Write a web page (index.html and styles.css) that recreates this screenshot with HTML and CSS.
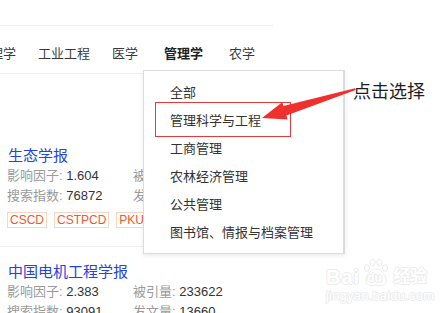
FILE: index.html
```html
<!DOCTYPE html>
<html lang="zh-CN">
<head>
<meta charset="utf-8">
<title>期刊列表</title>
<link rel="stylesheet" href="styles.css">
</head>
<body>
<div class="page">
  <div class="main">
    <div class="topbar"></div>
    <nav class="nav">
      <span class="nav-item">理学</span>
      <span class="nav-item">工业工程</span>
      <span class="nav-item">医学</span>
      <span class="nav-item active">管理学</span>
      <span class="nav-item">农学</span>
    </nav>
    <div class="list">
      <div class="card">
        <div class="title">生态学报</div>
        <div class="row"><span class="col1"><span class="lbl">影响因子: </span>1.604</span><span class="col2"><span class="lbl">被引量: </span>117452</span></div>
        <div class="row"><span class="col1"><span class="lbl">搜索指数: </span>76872</span><span class="col2"><span class="lbl">发文量: </span>18032</span></div>
        <div class="tags"><span class="tag">CSCD</span><span class="tag">CSTPCD</span><span class="tag">PKU</span></div>
      </div>
      <div class="card">
        <div class="title">中国电机工程学报</div>
        <div class="row"><span class="col1"><span class="lbl">影响因子: </span>2.383</span><span class="col2"><span class="lbl">被引量: </span>233622</span></div>
        <div class="row"><span class="col1"><span class="lbl">搜索指数: </span>93091</span><span class="col2"><span class="lbl">发文量: </span>13660</span></div>
      </div>
    </div>
  </div>

  <ul class="dropdown">
    <li>全部</li>
    <li>管理科学与工程</li>
    <li>工商管理</li>
    <li>农林经济管理</li>
    <li>公共管理</li>
    <li>图书馆、情报与档案管理</li>
  </ul>

  <div class="highlight"></div>
  <svg class="arrow" width="444" height="313" viewBox="0 0 444 313">
    <polygon fill="#f0302c" points="262,118 282.2,102.3 283.4,106.1 355,88.3 355.6,89.9 286.4,115.6 287.6,119.4"/>
  </svg>
  <div class="note">点击选择</div>

  <div class="watermark">
    <div class="wm-top">
      <span class="wm-bai">Bai</span>
      <span class="wm-paw">
        <svg width="30" height="30" viewBox="0 0 30 30">
          <g fill="#fff" stroke="#e9e9e9" stroke-width="0.9">
            <ellipse cx="6" cy="10" rx="2.6" ry="3.2"/>
            <ellipse cx="11.5" cy="4.5" rx="2.6" ry="3.2"/>
            <ellipse cx="18.5" cy="4.5" rx="2.6" ry="3.2"/>
            <ellipse cx="24" cy="10" rx="2.6" ry="3.2"/>
            <path d="M15 11 C9 11 4 19 5 24 C6 28 10 28 15 27 C20 28 24 28 25 24 C26 19 21 11 15 11 Z"/>
          </g>
        </svg>
        <span class="wm-du">du</span>
      </span>
      <span class="wm-jy">经验</span>
    </div>
    <div class="wm-url">jingyan.baidu.com</div>
  </div>
</div>
</body>
</html>
```

FILE: styles.css
```css
* { box-sizing: border-box; }
html, body {
  margin: 0;
  padding: 0;
  background: #fff;
}
body {
  font-family: "Liberation Sans", "Noto Sans CJK SC", sans-serif;
  color: #333;
  font-size: 13px;
}
.page {
  position: relative;
  width: 444px;
  height: 313px;
  overflow: hidden;
}
.main {
  width: 273px;
}
.topbar {
  height: 26px;
  border-bottom: 1px solid #eeeeee;
}
.nav {
  display: flex;
  gap: 22px;
  margin-left: -10px;
  padding: 18px 0 9px;
  line-height: 20px;
  font-size: 13px;
  color: #3a3a3a;
  border-bottom: 1px solid #eeeeee;
  white-space: nowrap;
}
.nav-item.active {
  font-weight: bold;
  color: #222;
  padding: 0 4px;
}
.list {
  padding-top: 57px;
}
.card {
  padding: 15px 0 18px 7px;
  border-bottom: 1px solid #eeeeee;
}
.title {
  font-size: 15px;
  line-height: 20px;
  color: #2244dd;
  padding-left: 1px;
}
.row {
  display: flex;
  line-height: 20px;
  font-size: 13px;
  color: #333;
  white-space: nowrap;
}
.col1 { width: 126px; }
.lbl { color: #9a9a9a; }
.tags {
  display: flex;
  gap: 7px;
  margin-top: 6px;
}
.tag {
  font-size: 12px;
  line-height: 14px;
  padding: 0 2px;
  border: 1px solid #fbd5c2;
  color: #f5582a;
}
.dropdown {
  position: absolute;
  left: 143px;
  top: 70px;
  width: 202px;
  margin: 0;
  padding: 8px 0 6px;
  list-style: none;
  background: #fff;
  border: 1px solid #dddddd;
  border-right: 2px solid #dcdcdc;
  box-shadow: 0 2px 4px rgba(0, 0, 0, 0.08);
}
.dropdown li {
  line-height: 28px;
  padding-left: 26px;
  font-size: 13px;
  color: #333;
  white-space: nowrap;
}
.highlight {
  position: absolute;
  left: 155px;
  top: 102px;
  width: 136px;
  height: 35px;
  border: 1.5px solid #e8393a;
}
.arrow {
  position: absolute;
  left: 0;
  top: 0;
  pointer-events: none;
}
.note {
  position: absolute;
  left: 353px;
  top: 78px;
  font-size: 18px;
  line-height: 24px;
  color: #1e1e1e;
  font-family: "Noto Sans CJK SC", sans-serif;
}
.watermark {
  position: absolute;
  left: 326px;
  top: 258px;
  color: #fff;
  font-family: "Liberation Sans", "Noto Sans CJK SC", sans-serif;
}
.wm-top {
  display: flex;
  align-items: flex-end;
  height: 30px;
}
.wm-bai, .wm-jy, .wm-du, .wm-url {
  text-shadow: -1px 0 #ececec, 1px 0 #ececec, 0 -1px #ececec, 0 1px #ececec;
}
.wm-bai {
  font-size: 20px;
  font-weight: bold;
  line-height: 22px;
  letter-spacing: 1px;
}
.wm-paw {
  position: relative;
  width: 30px;
  height: 30px;
  margin: 0 2px 0 1px;
}
.wm-paw svg { display: block; }
.wm-du {
  position: absolute;
  left: 6px;
  top: 13px;
  font-size: 12px;
  font-weight: bold;
  line-height: 14px;
}
.wm-jy {
  font-size: 17px;
  font-weight: bold;
  line-height: 22px;
}
.wm-url {
  font-size: 13px;
  line-height: 14px;
  margin-top: 1px;
  letter-spacing: 0.2px;
}
```
